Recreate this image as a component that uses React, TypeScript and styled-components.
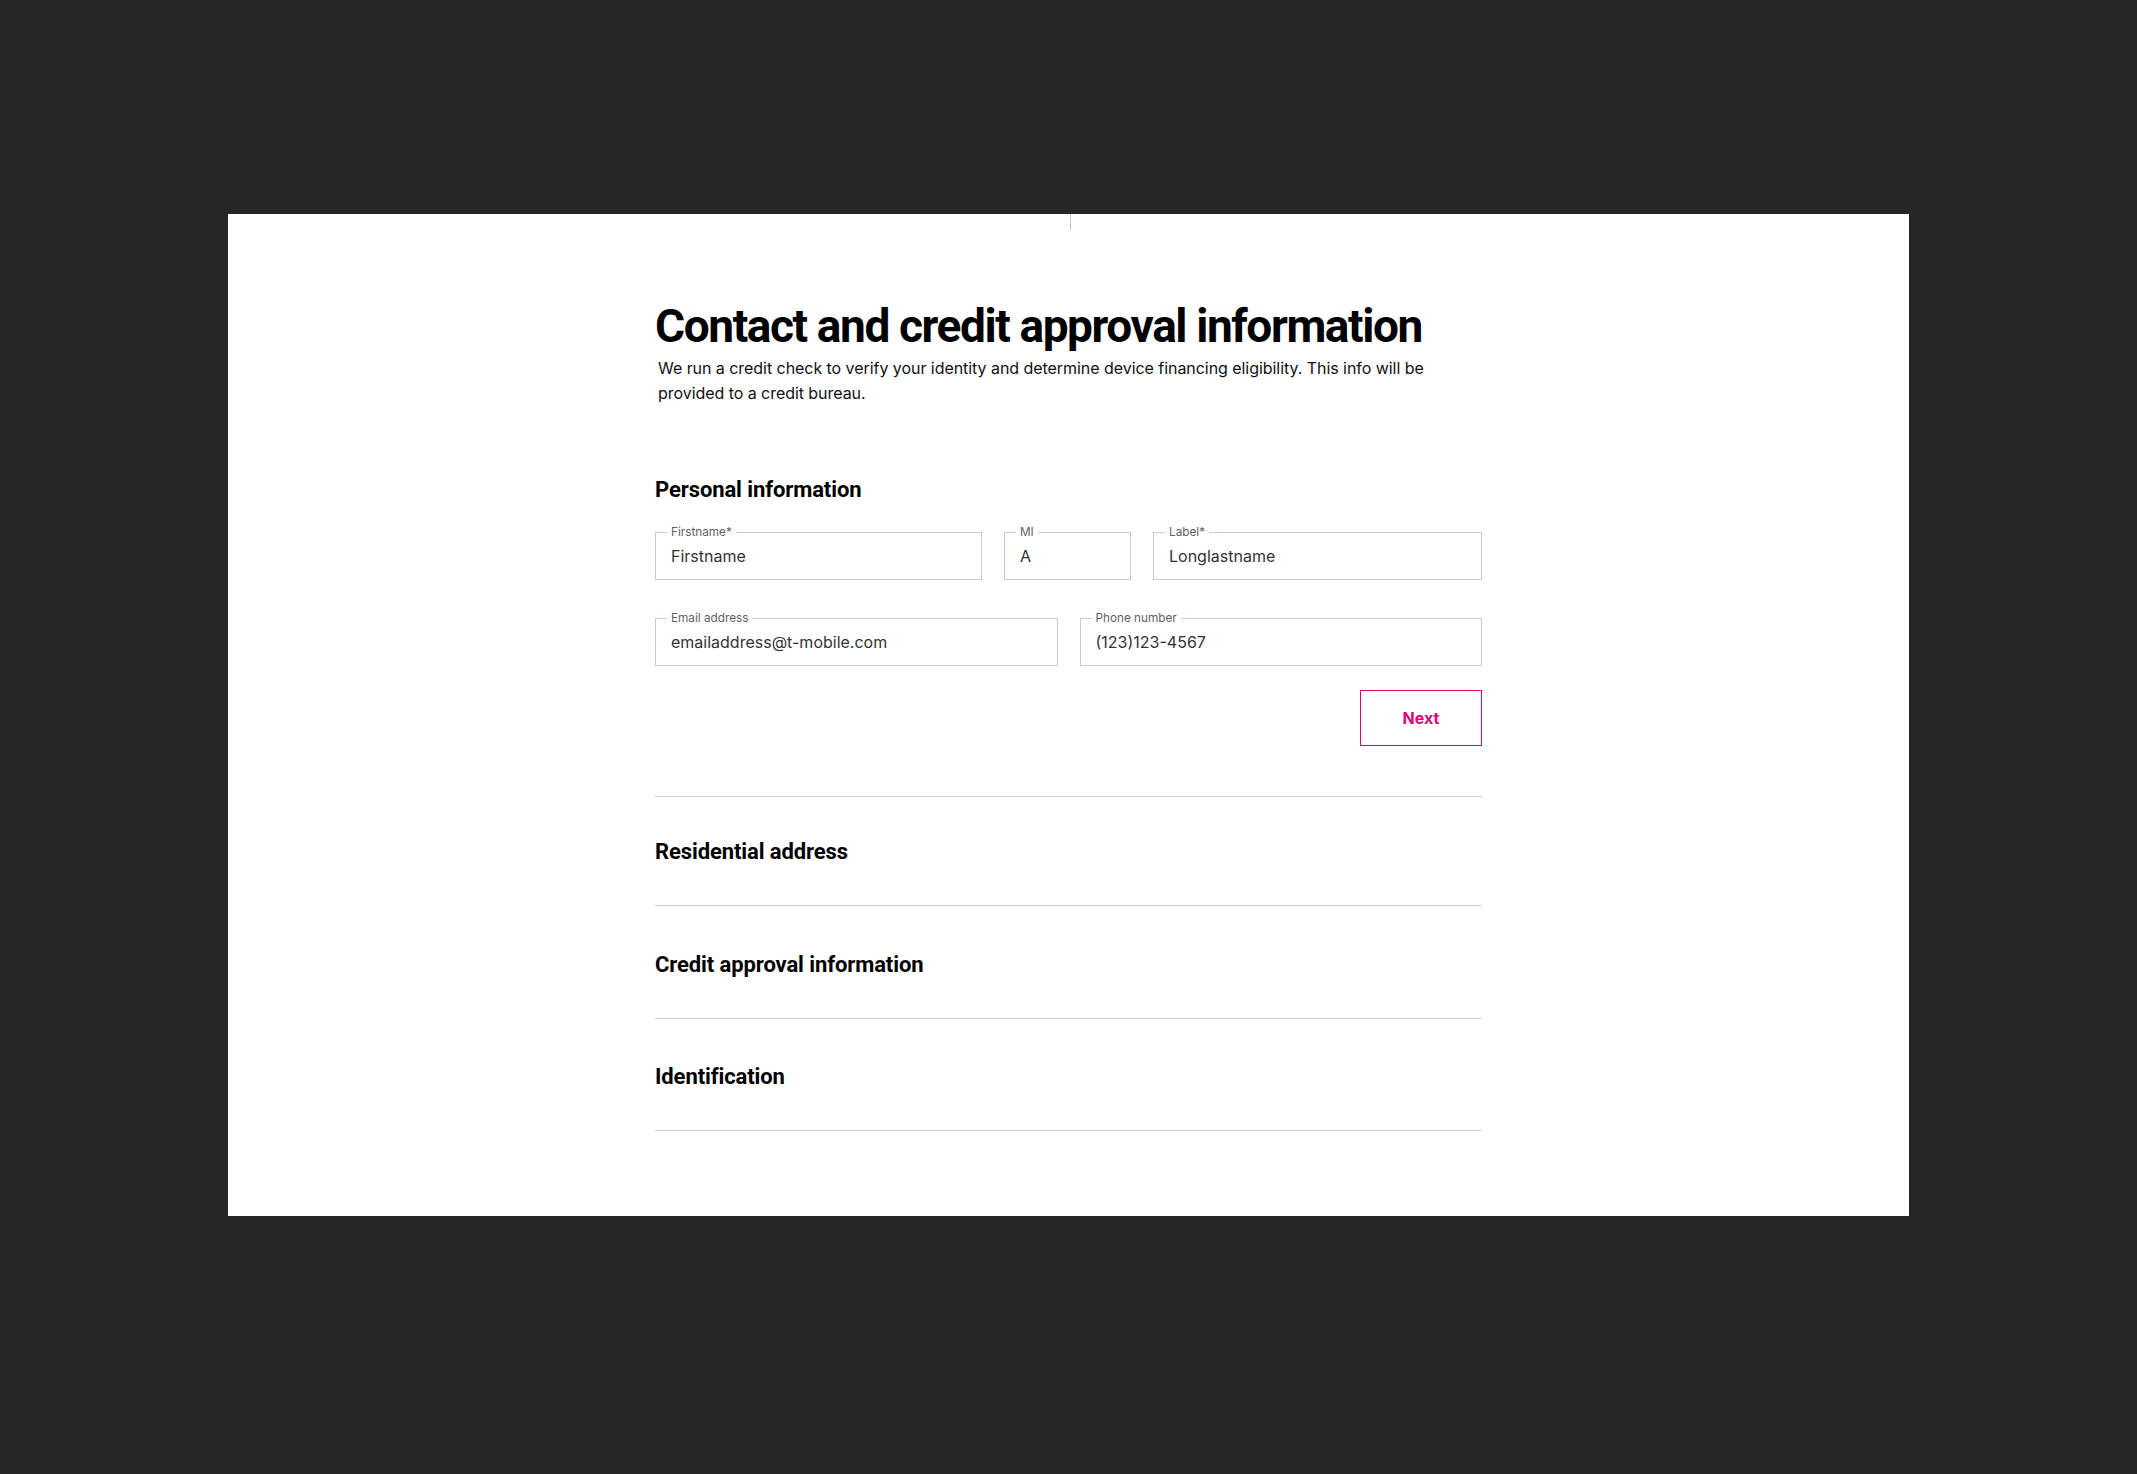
import React from "react";
import styled, { createGlobalStyle } from "styled-components";

const Global = createGlobalStyle`
  html, body {
    margin: 0;
    padding: 0;
    background: #262626;
  }
  body {
    font-family: Inter, "Noto Sans", sans-serif;
    -webkit-font-smoothing: antialiased;
  }
  * { box-sizing: border-box; }
`;

const Page = styled.div`
  width: 2137px;
  min-height: 1474px;
  padding: 214px 0 0 228px;
  background: #262626;
`;

const Card = styled.main`
  width: 1681px;
  height: 1002px;
  background: #ffffff;
  display: flex;
  flex-direction: column;
  align-items: center;
`;

const TopTick = styled.div`
  width: 1px;
  height: 16px;
  background: #c4c4c4;
  margin-left: 3px;
`;

const Content = styled.div`
  width: 827px;
  display: flex;
  flex-direction: column;
  margin-top: 71px;
`;

const Title = styled.h1`
  margin: 0;
  font-family: Roboto, "Liberation Sans", sans-serif;
  font-weight: 700;
  font-size: 46px;
  line-height: 50px;
  letter-spacing: -1.4px;
  color: #000;
  white-space: nowrap;
`;

const Intro = styled.p`
  margin: 5px 0 0;
  padding-left: 3px;
  font-family: Inter, "Noto Sans", sans-serif;
  font-size: 16px;
  line-height: 24.5px;
  letter-spacing: -0.05px;
  color: #111;
  max-width: 800px;
`;

const SectionTitle = styled.h2<{ $top?: number }>`
  margin: ${(p) => p.$top ?? 0}px 0 0;
  font-family: Roboto, "Liberation Sans", sans-serif;
  font-weight: 700;
  font-size: 22px;
  line-height: 28px;
  letter-spacing: -0.1px;
  color: #000;
`;

const Fields = styled.div`
  display: flex;
  flex-direction: column;
  gap: 38px;
  margin-top: 28px;
`;

const Row = styled.div<{ $cols: string }>`
  display: grid;
  grid-template-columns: ${(p) => p.$cols};
  column-gap: 22px;
`;

const Field = styled.label`
  position: relative;
  display: flex;
  align-items: center;
  height: 48px;
  border: 1px solid #cccccc;
  padding: 0 15px;
  font-family: Inter, "Noto Sans", sans-serif;
  font-size: 16px;
  color: #333333;
`;

const FieldLabel = styled.span`
  position: absolute;
  left: 11px;
  top: -8px;
  padding: 0 4px;
  background: #fff;
  font-size: 11.75px;
  line-height: 14px;
  color: #5f5f5f;
`;

const Actions = styled.div`
  display: flex;
  justify-content: flex-end;
  margin-top: 24px;
`;

const NextButton = styled.button`
  width: 122px;
  height: 56px;
  border: 1px solid #e20074;
  background: #fff;
  color: #e20074;
  font-family: Inter, "Noto Sans", sans-serif;
  font-weight: 700;
  font-size: 16px;
  cursor: pointer;
`;

const Accordion = styled.div`
  margin-top: 50px;
  display: flex;
  flex-direction: column;
  border-top: 1px solid #cfcfcf;
`;

const AccordionItem = styled.div<{ $padTop: number }>`
  padding: ${(p) => p.$padTop}px 0 39px;
  border-bottom: 1px solid #cfcfcf;
`;

type FieldDef = { label: string; value: string };

const row1: FieldDef[] = [
  { label: "Firstname*", value: "Firstname" },
  { label: "MI", value: "A" },
  { label: "Label*", value: "Longlastname" },
];

const row2: FieldDef[] = [
  { label: "Email address", value: "emailaddress@t-mobile.com" },
  { label: "Phone number", value: "(123)123-4567" },
];

const sections = [
  { title: "Residential address", pad: 41 },
  { title: "Credit approval information", pad: 45 },
  { title: "Identification", pad: 44 },
];

export default function App() {
  return (
    <>
      <Global />
      <Page>
        <Card>
          <TopTick />
          <Content>
            <Title>Contact and credit approval information</Title>
            <Intro>
              We run a credit check to verify your identity and determine device
              financing eligibility. This info will be provided to a credit bureau.
            </Intro>
            <SectionTitle $top={71}>Personal information</SectionTitle>
            <Fields>
              <Row $cols="327px 127px 1fr">
                {row1.map((f) => (
                  <Field key={f.label}>
                    <FieldLabel>{f.label}</FieldLabel>
                    {f.value}
                  </Field>
                ))}
              </Row>
              <Row $cols="1fr 1fr">
                {row2.map((f) => (
                  <Field key={f.label}>
                    <FieldLabel>{f.label}</FieldLabel>
                    {f.value}
                  </Field>
                ))}
              </Row>
            </Fields>
            <Actions>
              <NextButton type="button">Next</NextButton>
            </Actions>
            <Accordion>
              {sections.map((s) => (
                <AccordionItem key={s.title} $padTop={s.pad}>
                  <SectionTitle>{s.title}</SectionTitle>
                </AccordionItem>
              ))}
            </Accordion>
          </Content>
        </Card>
      </Page>
    </>
  );
}
